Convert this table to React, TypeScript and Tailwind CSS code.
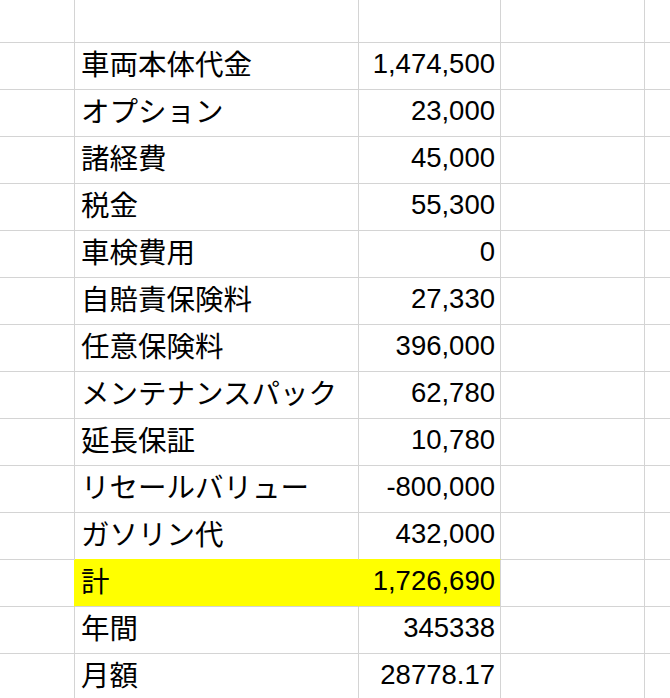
const rows: [string, string][] = [
  ['車両本体代金', '1,474,500'],
  ['オプション', '23,000'],
  ['諸経費', '45,000'],
  ['税金', '55,300'],
  ['車検費用', '0'],
  ['自賠責保険料', '27,330'],
  ['任意保険料', '396,000'],
  ['メンテナンスパック', '62,780'],
  ['延長保証', '10,780'],
  ['リセールバリュー', '-800,000'],
  ['ガソリン代', '432,000'],
  ['計', '1,726,690'],
  ['年間', '345338'],
  ['月額', '28778.17'],
]

const TOTAL = 11

export default function App() {
  return (
    <div className="w-[670px] h-[698px] overflow-hidden bg-white text-black">
      {/* top partial row */}
      <div className="flex h-[43px]">
        <div className="w-[75px] border-r border-b border-[#d4d4d4]" />
        <div className="w-[284px] border-r border-b border-[#d4d4d4]" />
        <div className="w-[142px] border-r border-b border-[#d4d4d4]" />
        <div className="w-[144px] border-r border-b border-[#d4d4d4]" />
        <div className="flex-1 border-b border-[#d4d4d4]" />
      </div>

      {rows.map(([label, value], i) => {
        const hl = i === TOTAL
        const beforeHl = i === TOTAL - 1
        return (
          <div key={label} className="flex h-[47px]">
            <div
              className={`w-[75px] border-b border-r border-b-[#d4d4d4] ${
                hl ? 'border-r-[#ffff00]' : 'border-r-[#d4d4d4]'
              }`}
            />
            <div
              className={`w-[284px] flex items-center pl-[6px] pb-[5px] border-r border-b font-['Noto_Sans_CJK_JP',sans-serif] text-[28.5px] leading-none ${
                hl ? 'bg-[#ffff00] border-r-[#ffff00]' : 'border-r-[#d4d4d4]'
              } ${beforeHl ? 'border-b-[#ffff00]' : 'border-b-[#d4d4d4]'}`}
            >
              {label}
            </div>
            <div
              className={`w-[142px] flex items-center justify-end pr-[5px] pb-[4px] border-r border-b border-r-[#d4d4d4] font-['Liberation_Sans',Arial,sans-serif] text-[27.5px] leading-none ${
                hl ? 'bg-[#ffff00]' : ''
              } ${beforeHl ? 'border-b-[#ffff00]' : 'border-b-[#d4d4d4]'}`}
            >
              {value}
            </div>
            <div className="w-[144px] border-r border-b border-[#d4d4d4]" />
            <div className="flex-1 border-b border-[#d4d4d4]" />
          </div>
        )
      })}
    </div>
  )
}
